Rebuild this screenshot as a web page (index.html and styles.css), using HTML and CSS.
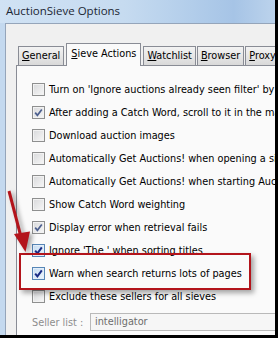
FILE: index.html
```html
<!DOCTYPE html>
<html>
<head>
    <title>AuctionSieve Options</title>
  <link rel="stylesheet" href="styles.css">
</head>
<body>
    <div class="window">
        <div class="titlebar">AuctionSieve Options</div>
        <div class="frame">
            <div class="client">
                <div class="tabs">
                    <div class="tab"><u>G</u>eneral</div>
                    <div class="tab selected"><u>S</u>ieve Actions</div>
                    <div class="tab"><u>W</u>atchlist</div>
                    <div class="tab"><u>B</u>rowser</div>
                    <div class="tab"><u>P</u>roxy</div>
                </div>
                <div class="panel">
                    <div class="option"><span class="box"></span>Turn on 'Ignore auctions already seen filter' by default</div>
                    <div class="option"><span class="box checked"><svg viewBox="0 0 11 11"><path d="M2.2 5.6 L4.4 8.3 L8.8 2.4"/></svg></span>After adding a Catch Word, scroll to it in the main list</div>
                    <div class="option"><span class="box"></span>Download auction images</div>
                    <div class="option"><span class="box"></span>Automatically Get Auctions! when opening a sieve</div>
                    <div class="option"><span class="box"></span>Automatically Get Auctions! when starting AuctionSieve</div>
                    <div class="option"><span class="box"></span>Show Catch Word weighting</div>
                    <div class="option"><span class="box checked"><svg viewBox="0 0 11 11"><path d="M2.2 5.6 L4.4 8.3 L8.8 2.4"/></svg></span>Display error when retrieval fails</div>
                    <div class="option"><span class="box checked hot"><svg viewBox="0 0 11 11"><path d="M2.2 5.6 L4.4 8.3 L8.8 2.4"/></svg></span>Ignore 'The ' when sorting titles</div>
                    <div class="option"><span class="box checked hot"><svg viewBox="0 0 11 11"><path d="M2.2 5.6 L4.4 8.3 L8.8 2.4"/></svg></span>Warn when search returns lots of pages</div>
                    <div class="option"><span class="box"></span>Exclude these sellers for all sieves</div>
                    <div class="seller">
                        <span class="label">Seller list :</span>
                        <span class="field">intelligator</span>
                    </div>
                </div>
            </div>
        </div>
        <!-- annotation drawn over the dialog -->
        <div class="callout"></div>
        <svg class="arrow" width="40" height="75" viewBox="0 0 40 75">
            <line x1="9" y1="6" x2="20.5" y2="50" />
            <polygon points="14,49 30,46.5 25.5,67" />
        </svg>
    </div>
</body>
</html>
```

FILE: styles.css
```css
body {
    margin: 0;
    background-color: #000;
}

.window {
    position: relative;
    width: 275px;
    height: 335px;
    overflow: hidden;
    background-color: #c4d9ef;
    border-right: 3px solid #000;
    border-bottom: 3px solid #000;
    font-family: "DejaVu Sans Condensed", "DejaVu Sans", sans-serif;
    font-size: 10.8px;
}

.titlebar {
    height: 23px;
    line-height: 21px;
    padding-left: 6px;
    font-family: "Open Sans", "Noto Sans", sans-serif;
    font-size: 11.5px;
    color: #1b2633;
    white-space: nowrap;
    background: linear-gradient(to right, #d0e2f4 0%, #c6dbf0 45%, #b2cdea 70%, #a6c4e6 85%, #bcd3ec 100%);
}

.frame {
    padding-left: 5px;
    height: 312px;
}

.client {
    height: 100%;
    box-sizing: border-box;
    padding: 19px 0 0 10px;
    background-color: #f0f0f0;
    border-top: 1px solid #95a5ba;
    border-left: 1px solid #95a5ba;
    overflow: hidden;
}

.tabs {
    display: flex;
    align-items: flex-end;
    gap: 1px;
    height: 22px;
    padding-left: 2px;
    white-space: nowrap;
}

.tab {
    height: 18px;
    line-height: 18px;
    padding: 0 3px;
    border: 1px solid #898c95;
    border-bottom: none;
    background: linear-gradient(#f3f3f3, #e6e6e6 50%, #d9d9d9);
    color: #000;
}

.tab.selected {
    position: relative;
    z-index: 1;
    height: 22px;
    line-height: 19px;
    padding: 0 4px;
    margin: 0 1px -1px 1px;
    background: #fafafa;
}

.panel {
    width: 300px;
    height: 260px;
    padding-top: 12px;
    background-color: #fafafa;
    border: 1px solid #898c95;
}

.option {
    display: flex;
    align-items: center;
    gap: 4px;
    height: 23px;
    padding-left: 15px;
    white-space: nowrap;
    color: #000;
}

.box {
    flex: none;
    width: 13px;
    height: 13px;
    box-sizing: border-box;
    border: 1px solid #8e8f8f;
    background: linear-gradient(135deg, #d8d9db, #f7f7f7);
    box-shadow: inset 0 0 0 1px #f2f2f2;
}

.box svg {
    display: block;
    width: 11px;
    height: 11px;
}

.box path {
    fill: none;
    stroke: #4c5f8e;
    stroke-width: 1.7;
}

.box.hot {
    border-color: #5686b6;
    background: linear-gradient(135deg, #c4dcf2, #eef6fd);
    box-shadow: inset 0 0 0 1px #e3eefa;
}

.box.hot path {
    stroke: #1a2c86;
    stroke-width: 2;
}

.seller {
    display: flex;
    align-items: center;
    margin-top: 5px;
    padding-left: 15px;
    white-space: nowrap;
}

.label {
    width: 58px;
    color: #8d8d8d;
}

.field {
    flex: 1;
    height: 18px;
    line-height: 16px;
    box-sizing: border-box;
    padding-left: 4px;
    border: 1px solid #b9b9b9;
    background-color: #f6f6f6;
    color: #6d6d6d;
}

.callout {
    position: absolute;
    left: 19px;
    top: 253px;
    width: 232px;
    height: 37px;
    box-sizing: border-box;
    border: 2px solid #b3141b;
    box-shadow: 3px 3px 5px rgba(0, 0, 0, 0.35);
}

.arrow {
    position: absolute;
    left: 0;
    top: 185px;
    filter: drop-shadow(3px 2px 2px rgba(0, 0, 0, 0.35));
}

.arrow line {
    stroke: #b3141b;
    stroke-width: 3;
}

.arrow polygon {
    fill: #b3141b;
}
```
